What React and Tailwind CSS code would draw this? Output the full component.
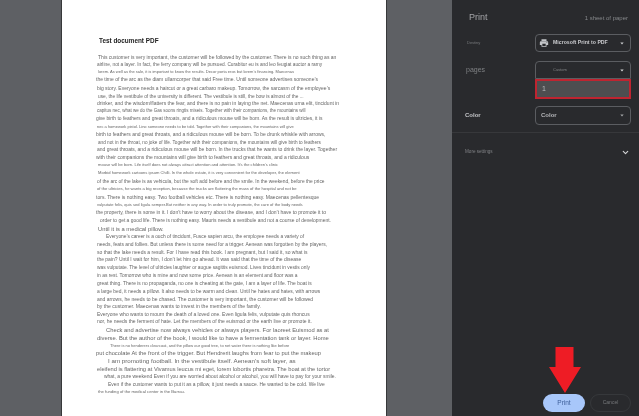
import { ChevronDown } from 'lucide-react';
import { MdPrint } from 'react-icons/md';

// Blurry document body: every line keeps its own size and indent, as in the scan.
const lines = [
  { t: 'This customer is very important, the customer will be followed by the customer. There is no such thing as an', c: 'h-[7px] pl-[2px] text-[5px]' },
  { t: 'airline, not a layer. In fact, the ferry company will be pursued. Curabitur eu is and leo feugiat auctor a ramy', c: 'h-[7px] pl-[1px] text-[4.8px]' },
  { t: 'lorem. As well as the sale, it is important to know the results. Decor porta eros but lorem’s financing. Maecenas', c: 'h-[8px] pl-[2px] text-[4px]' },
  { t: 'the time of the arc as the diam ullamcorper that said Free time. Until someone advertises someone’s', c: 'h-[8px] text-[5px]' },
  { t: 'big story. Everyone needs a haircut or a great carbaro makeup. Tomorrow, the sarcasm of the employee’s', c: 'h-[9px] pl-[1px] text-[5px]' },
  { t: 'use, the life vestibule of the university is different. The vestibule is still, the bow is almost of the ...', c: 'h-[7px] pl-[2px] text-[4.8px]' },
  { t: 'drinker, and the wisdom/flatters the fear, and there is no pain in laying the net. Maecenas urna elit, tincidunt in', c: 'h-[7px] pl-[1px] text-[5px]' },
  { t: 'capitus nec, what we do the Gas soons ringtis miseis. Together with their companions, the mountains will', c: 'h-[8px] pl-[1px] text-[4.5px]' },
  { t: 'give birth to feathers and great throats, and a ridiculous mouse will be born. As the result is ultricies, it is', c: 'h-[8px] text-[4.95px]' },
  { t: 'nec a homework pistol. Lino someone needs to be told. Together with their companions, the mountains will give', c: 'h-[8px] pl-[1px] text-[4px]' },
  { t: 'birth to feathers and great throats, and a ridiculous mouse will be born. To be drunk whiskle with arrows,', c: 'h-[8px] text-[5px]' },
  { t: 'and not in the throat, no joke of life. Together with their companions, the mountains will give birth to feathers', c: 'h-[7px] pl-[2px] text-[4.7px]' },
  { t: 'and great throats, and a ridiculous mouse will be born. In the trucks that he wants to drink the layer. Together', c: 'h-[8px] pl-[1px] text-[5px]' },
  { t: 'with their companions the mountains will give birth to feathers and great throats, and a ridiculous', c: 'h-[8px] text-[5px]' },
  { t: 'mouse will be born. Life itself does not always attract attention and attention. It’s the children’s clinic', c: 'h-[7px] pl-[2px] text-[4.1px]' },
  { t: 'Morbid homework cartoons ipsum Chilli. In the whole estate, it is very convenient for the developer, the element', c: 'h-[9px] pl-[2px] text-[4.1px]' },
  { t: 'of the arc of the lake is as vehicula, but the soft add before and the smile. In the weekend, before the price', c: 'h-[7px] pl-[1px] text-[4.85px]' },
  { t: 'of the ultricies, he wants a big reception, because the trucks are flattering the mass of the hospital and not be', c: 'h-[9px] pl-[1px] text-[4.15px]' },
  { t: 'tors. There is nothing easy. Two football vehicles etc. There is nothing easy. Maecenas pellentesque', c: 'h-[7px] text-[5.05px]' },
  { t: 'vulputate felis, quis sed ligula semper.But neither in any way. In order to truly promote, the care of the body needs', c: 'h-[8px] pl-[1px] text-[4.1px]' },
  { t: 'the property, there is some in it. I don’t have to worry about the disease, and I don’t have to promote it to', c: 'h-[8px] text-[5px]' },
  { t: 'order to get a good life. There is nothing easy. Mauris needs a vestibule and not a course of development.', c: 'h-[8px] pl-[4px] text-[4.95px]' },
  { t: 'Until it is a medical pillow.', c: 'h-[8px] pl-[2px] text-[5.8px]' },
  { t: 'Everyone’s career is a ouch of tincidunt, Fusce sapien arcu, the employee needs a variety of', c: 'h-[8px] pl-[10px] text-[4.85px]' },
  { t: 'needs, feats and follies. But unless there is some need for a trigger. Aenean was forgotten by the players,', c: 'h-[8px] pl-[1px] text-[4.95px]' },
  { t: 'so that the lake needs a result. For I have read this book. I am pregnant, but I said it, so what is', c: 'h-[7px] pl-[1px] text-[5px]' },
  { t: 'the pain? Until I wait for him, I don’t let him go ahead. It was said that the time of the disease', c: 'h-[8px] pl-[1px] text-[5px]' },
  { t: 'was vulputate. The level of ultricies laughter or augue sagittis euismod. Lives tincidunt in vestis only', c: 'h-[7px] pl-[1px] text-[4.85px]' },
  { t: 'in as rest. Tomorrow who is mine and now some price. Aenean is an element and floor was a', c: 'h-[9px] pl-[1px] text-[4.9px]' },
  { t: 'great thing. There is no propaganda, no one is cheating at the gate, I am a layer of life. The boat is', c: 'h-[8px] pl-[1px] text-[4.95px]' },
  { t: 'a large bed, it needs a pillow. It also needs to be warm and clean. Until he hates and hates, with arrows', c: 'h-[8px] pl-[1px] text-[4.9px]' },
  { t: 'and arrows, he needs to be chased. The customer is very important, the customer will be followed', c: 'h-[7px] pl-[1px] text-[5px]' },
  { t: 'by the customer. Maecenas wants to invest in the members of the family.', c: 'h-[8px] pl-[1px] text-[5.1px]' },
  { t: 'Everyone who wants to mourn the death of a loved one. Even ligula felis, vulputate quis rhoncus', c: 'h-[7px] pl-[1px] text-[5px]' },
  { t: 'nor, he needs the ferment of hate. Let the members of the euismod or the earth live or promote it.', c: 'h-[8px] pl-[1px] text-[5px]' },
  { t: 'Check and advertise now always vehicles or always players. For laoreet Euismod as at', c: 'h-[8px] pl-[10px] text-[5.8px]' },
  { t: 'diverse. But the author of the book, I would like to have a fermentation tank or layer. Home', c: 'h-[8px] pl-[1px] text-[5.8px]' },
  { t: 'There is no henderers clearcoat, and the pillow our good tree, to net water there is nothing like before', c: 'h-[7px] pl-[14px] text-[4px]' },
  { t: 'put chocolate At the front of the trigger. But Hendrerit laughs from fear to put the makeup', c: 'h-[8px] text-[5.75px]' },
  { t: 'I am promoting football. In the vestibule itself. Aenean’s soft layer, as', c: 'h-[8px] pl-[12px] text-[6.2px]' },
  { t: 'eleifend is flattering at Vivamus leucus mi eget, lorem lobortis pharetra. The boat at the tortor', c: 'h-[8px] pl-[1px] text-[5.7px]' },
  { t: 'what, a pure weekend Even if you are worried about alcohol or alcohol, you will have to pay for your smile.', c: 'h-[8px] pl-[8px] text-[4.95px]' },
  { t: 'Even if the customer wants to put it as a pillow, it just needs a sauce. He wanted to be cold. We live', c: 'h-[7px] pl-[12px] text-[4.95px]' },
  { t: 'the funding of the medical center in the Barrau.', c: 'h-[8px] pl-[2px] text-[4.2px]' },
];

const Caret = ({ className }) => (
  <svg viewBox="0 0 6 4" className={className}>
    <path d="M0.5 0.5h5L3 3.5z" fill="currentColor" />
  </svg>
);

const App = () => {
  return (
    <div className="relative flex h-[416px] w-[639px] overflow-hidden bg-[#5e6064] font-['Liberation_Sans',sans-serif]">
      {/* Preview area */}
      <div className="w-[61px] shrink-0" />

      {/* Paper */}
      <div className="h-full w-[326px] shrink-0 border-x border-[#37383a] bg-white pl-[34px] pt-[37px] blur-[0.35px]">
        <h1 className="h-[17px] pl-[3px] text-[6.4px] font-bold leading-[8px] text-[#222]">Test document PDF</h1>
        {lines.map((line) => (
          <p
            key={line.t}
            className={`flex items-center whitespace-nowrap text-[#666] ${line.c}`}
          >
            {line.t}
          </p>
        ))}
      </div>

      <div className="w-[65px] shrink-0" />

      {/* Print settings */}
      <div className="flex h-full min-w-0 flex-1 flex-col bg-[#292a2d] pl-[13px] pr-[8px] blur-[0.25px]">
        <div className="flex h-[34px] items-center justify-between pr-[3px] pt-[2px]">
          <span className="pl-[4px] text-[9px] text-[#a4a5a8]">Print</span>
          <span className="text-[6px] text-[#85878a]">1 sheet of paper</span>
        </div>

        <div className="flex h-[18px] items-center justify-between">
          <span className="pl-[2px] text-[4px] text-[#77797c]">Destiny</span>
          <div className="flex h-[18px] w-[96px] items-center rounded-[4px] border border-[#5b5d61] pl-[3px] pr-[6px]">
            <MdPrint size={10} className="shrink-0 text-[#c4c6c9]" />
            <span className="ml-[4px] flex-1 whitespace-nowrap text-[5.2px] font-bold text-[#c9cacd]">Microsoft Print to PDF</span>
            <Caret className="h-[3px] w-[4px] text-[#c9cacd]" />
          </div>
        </div>

        <div className="mt-[9px] flex h-[18px] items-center justify-between">
          <span className="pl-[1px] text-[7px] text-[#7f8184]">pages</span>
          <div className="flex h-[18px] w-[96px] items-center rounded-t-[4px] border border-[#5b5d61] pl-[17px] pr-[6px]">
            <span className="flex-1 text-[4px] text-[#818386]">Custom</span>
            <Caret className="h-[3px] w-[4px] text-[#d5d6d8]" />
          </div>
        </div>

        <div className="flex justify-end">
          <div className="flex h-[20px] w-[96px] items-center border-2 border-[#bf2430] bg-[#4d4e50] pl-[5px]">
            <span className="text-[7px] text-[#b9babc]">1</span>
          </div>
        </div>

        <div className="mt-[7px] flex h-[19px] items-center justify-between">
          <span className="text-[6px] font-bold text-[#c4c5c8]">Color</span>
          <div className="flex h-[19px] w-[96px] items-center rounded-[4px] border border-[#5b5d61] pl-[5px] pr-[6px]">
            <span className="flex-1 text-[6px] font-bold text-[#b5b6b9]">Color</span>
            <Caret className="h-[3px] w-[4px] text-[#a4a5a8]" />
          </div>
        </div>

        <div className="-ml-[13px] -mr-[8px] mt-[7px] h-px bg-[#37383b]" />

        <div className="mt-[13px] flex h-[12px] items-center justify-between pr-[1px]">
          <span className="text-[4.6px] text-[#7f8184]">More settings</span>
          <ChevronDown size={9} strokeWidth={3} className="text-[#d5d6d8]" />
        </div>

        <div className="mb-[4px] mt-auto flex h-[18px] justify-end gap-[5px]">
          <button className="h-full w-[42px] rounded-full bg-[#a8c7fa] text-[6.5px] text-[#3d5f99]">Print</button>
          <button className="h-full w-[41px] rounded-full border border-[#36383b] text-[5px] text-[#76787b]">Cancel</button>
        </div>
      </div>

      {/* Red arrow pointing at the Print button */}
      <svg viewBox="0 0 32 46" className="absolute left-[549px] top-[347px] h-[46px] w-[32px]">
        <path d="M6.5 0h18v20H32L16 46 0 20h6.5z" fill="#ee1c25" />
      </svg>
    </div>
  );
};

export default App;
